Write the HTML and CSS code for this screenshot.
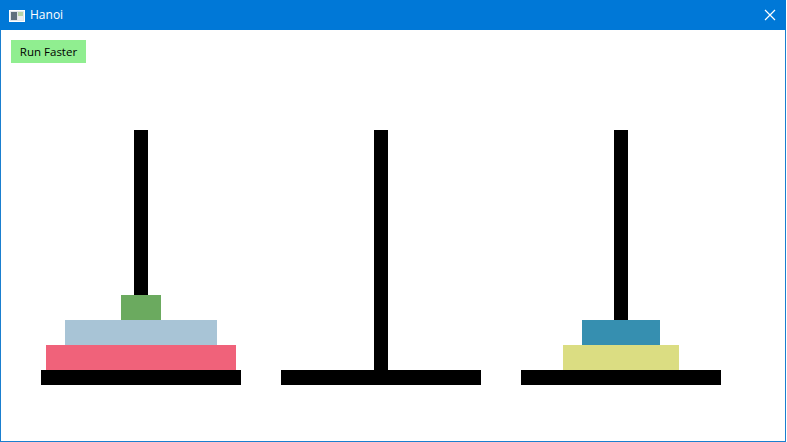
FILE: index.html
```html
<!DOCTYPE html>
<html>
<head>
<meta charset="utf-8">
<title>Hanoi</title>
<link rel="stylesheet" href="styles.css">
</head>
<body>
<div class="window">
  <div class="titlebar">
    <svg class="app-icon" width="16" height="12" viewBox="0 0 16 12">
      <rect x="0" y="0" width="16" height="12" fill="#ffffff"/>
      <rect x="1" y="1" width="14" height="10" fill="#dfe5ea"/>
      <rect x="2" y="2" width="6" height="8" fill="#5d6f7d"/>
      <rect x="9" y="2" width="5" height="4" fill="#b7d3a6"/>
      <rect x="9" y="6" width="5" height="4" fill="#e9ecef"/>
    </svg>
    <span class="title">Hanoi</span>
    <svg class="close" width="12" height="12" viewBox="0 0 12 12">
      <path d="M1 1 L11 11 M11 1 L1 11" stroke="#ffffff" stroke-width="1.2" fill="none"/>
    </svg>
  </div>
  <div class="client">
    <button class="run-btn">Run Faster</button>
    <div class="towers">
      <div class="tower">
        <div class="peg"></div>
        <div class="stack">
          <div class="disk d-green" style="width:40px"></div>
          <div class="disk d-slate" style="width:152px"></div>
          <div class="disk d-pink" style="width:190px"></div>
        </div>
        <div class="base"></div>
      </div>
      <div class="tower">
        <div class="peg"></div>
        <div class="stack"></div>
        <div class="base"></div>
      </div>
      <div class="tower">
        <div class="peg"></div>
        <div class="stack">
          <div class="disk d-teal" style="width:78px"></div>
          <div class="disk d-yellow" style="width:116px"></div>
        </div>
        <div class="base"></div>
      </div>
    </div>
  </div>
</div>
</body>
</html>
```

FILE: styles.css
```css
html, body {
  margin: 0;
  padding: 0;
  background: #ffffff;
}

body {
  width: 787px;
  height: 442px;
  overflow: hidden;
  font-family: "Open Sans", "Noto Sans", "Liberation Sans", sans-serif;
}

.window {
  width: 786px;
  height: 442px;
  display: flex;
  flex-direction: column;
}

.titlebar {
  height: 30px;
  flex: 0 0 30px;
  background: #0078d7;
  display: flex;
  align-items: center;
  color: #ffffff;
}

.app-icon {
  margin-left: 9px;
  margin-top: 1px;
  flex: 0 0 auto;
}

.title {
  margin-left: 5px;
  font-size: 12px;
  line-height: 16px;
}

.close {
  margin-left: auto;
  margin-right: 10px;
}

.client {
  flex: 1 1 auto;
  border-left: 1px solid #1a7fcf;
  border-right: 1px solid #1a7fcf;
  border-bottom: 1px solid #1a7fcf;
  background: #ffffff;
  display: flex;
  flex-direction: column;
  align-items: flex-start;
}

.run-btn {
  margin: 10px 0 0 10px;
  width: 75px;
  height: 23px;
  padding: 0;
  border: none;
  background: #90ee90;
  font-family: "Open Sans", "Noto Sans", "Liberation Sans", sans-serif;
  font-size: 11.5px;
  color: #000000;
  line-height: 23px;
  text-align: center;
}

.towers {
  margin: 67px 0 0 40px;
  display: flex;
  gap: 40px;
}

.tower {
  width: 200px;
  display: grid;
  grid-template-rows: 240px 15px;
  grid-template-columns: 200px;
}

.peg {
  grid-area: 1 / 1;
  justify-self: center;
  width: 14px;
  height: 240px;
  background: #000000;
}

.stack {
  grid-area: 1 / 1;
  align-self: end;
  justify-self: center;
  display: flex;
  flex-direction: column;
  align-items: center;
}

.disk {
  height: 25px;
}

.d-green { background: #6baa5f; }
.d-slate { background: #a8c4d6; }
.d-pink { background: #f0627a; }
.d-teal { background: #368fb0; }
.d-yellow { background: #dbdd82; }

.base {
  grid-area: 2 / 1;
  width: 200px;
  height: 15px;
  background: #000000;
}
```
